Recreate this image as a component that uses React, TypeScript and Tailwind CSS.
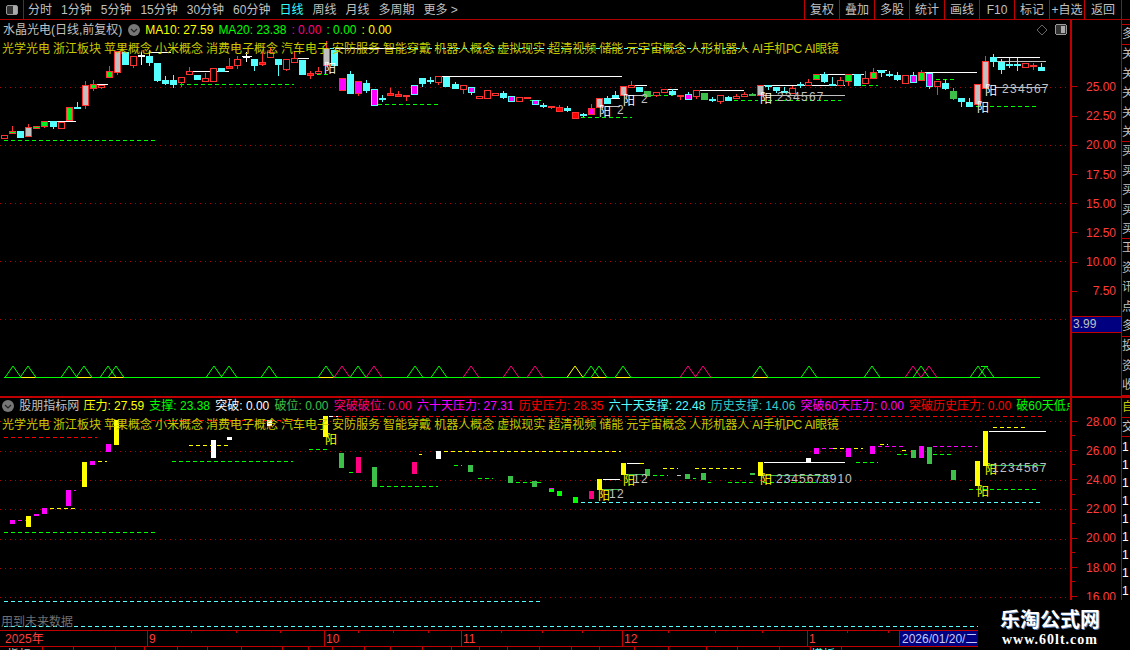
import React from "react";

const RED = "#ff3232";
const CYAN = "#55ffff";
const GREEN = "#00ff00";
const DULL = "#3cc04a";
const YELLOW = "#ffff00";
const MAGENTA = "#ff00ff";
const PINK = "#ff0080";
const WHITE = "#ffffff";
const GRAY = "#c0c0c0";

const candleStyle: Record<string, { fill: string; stroke: string; wick: string }> = {
  r: { fill: "#000000", stroke: RED, wick: RED },
  R: { fill: "#ff0000", stroke: RED, wick: RED },
  c: { fill: CYAN, stroke: CYAN, wick: CYAN },
  g: { fill: "#00ee20", stroke: RED, wick: RED },
  G: { fill: DULL, stroke: DULL, wick: DULL },
  m: { fill: MAGENTA, stroke: CYAN, wick: CYAN },
  M: { fill: MAGENTA, stroke: RED, wick: RED },
  w: { fill: GRAY, stroke: RED, wick: RED },
  W: { fill: WHITE, stroke: WHITE, wick: WHITE },
};

// type, body top, body bottom, wick top, wick bottom (read at 3x, divided below)
const candles: [string, number, number, number?, number?][] = [
  ["r", 406, 416], ["g", 394, 401, 378, 401], ["c", 394, 411], ["w", 381, 408, 372, 408], ["g", 378, 383],
  ["g", 364, 378, 364, 384], ["c", 364, 378, 364, 386], ["r", 366, 383], ["g", 322, 360], ["c", 321, 323, 306, 326],
  ["w", 255, 315, 243, 327], ["g", 252, 263, 240, 272], ["r", 256, 261, 256, 266], ["g", 213, 231, 198, 231], ["w", 153, 216, 153, 225],
  ["c", 155, 190, 155, 195], ["r", 168, 195, 168, 204], ["W", 165, 167, 155, 195], ["c", 168, 186, 150, 197], ["c", 190, 240, 190, 245],
  ["c", 240, 248, 228, 255], ["c", 240, 252, 225, 265], ["r", 232, 248, 232, 262], ["r", 214, 224, 200, 224], ["c", 225, 237, 225, 240],
  ["r", 235, 245, 220, 245], ["r", 205, 245], ["c", 205, 214], ["R", 197, 202, 175, 206], ["r", 178, 196, 168, 206],
  ["W", 168, 170, 155, 185], ["c", 178, 197, 178, 212], ["R", 187, 193, 155, 198], ["r", 155, 170, 140, 170], ["c", 178, 194, 178, 228],
  ["r", 178, 208, 178, 212], ["r", 175, 188, 155, 188], ["c", 180, 222], ["R", 219, 224, 212, 236], ["r", 213, 220, 202, 220],
  ["w", 145, 195, 122, 195], ["c", 150, 195], ["M", 234, 270], ["c", 222, 279, 212, 279], ["M", 243, 280, 243, 287],
  ["c", 250, 270, 240, 278], ["m", 267, 314], ["c", 295, 297, 285, 306], ["R", 278, 283, 265, 285], ["R", 283, 288, 272, 288],
  ["R", 286, 290, 286, 303], ["m", 255, 282], ["c", 235, 249, 235, 262], ["c", 240, 244, 230, 252], ["r", 229, 248, 229, 255],
  ["c", 230, 258], ["c", 252, 264, 245, 264], ["r", 256, 268, 256, 283], ["m", 262, 278, 262, 285], ["r", 289, 296],
  ["r", 270, 294], ["r", 278, 284, 278, 288], ["c", 279, 290, 272, 297], ["m", 288, 302], ["r", 292, 304],
  ["R", 292, 296], ["m", 300, 311], ["c", 315, 317, 308, 323], ["R", 318, 322, 318, 326], ["R", 322, 335, 315, 335],
  ["c", 325, 330, 318, 336], ["R", 335, 352], ["c", 343, 346, 338, 350], ["M", 324, 342, 312, 342], ["w", 294, 320],
  ["c", 294, 310, 288, 310], ["c", 284, 290, 274, 293], ["w", 258, 284], ["r", 256, 262, 243, 264], ["c", 260, 273],
  ["G", 273, 287], ["r", 277, 286, 277, 290], ["r", 268, 278], ["c", 273, 281, 268, 284], ["R", 286, 288, 286, 300],
  ["m", 282, 296, 276, 298], ["r", 271, 290, 271, 298], ["G", 279, 296], ["c", 297, 300, 292, 306], ["r", 286, 305, 286, 311],
  ["c", 291, 299, 288, 302], ["r", 289, 296, 283, 296], ["r", 282, 289, 276, 289], ["G", 282, 286, 279, 286], ["w", 256, 286],
  ["c", 256, 260, 256, 270], ["c", 262, 270, 262, 278], ["c", 272, 274, 260, 280], ["r", 264, 278, 258, 278], ["c", 253, 255, 246, 264],
  ["r", 247, 255, 238, 255], ["g", 222, 238], ["c", 222, 243, 216, 248], ["c", 252, 254, 232, 257], ["r", 240, 256, 230, 256],
  ["g", 223, 243, 223, 258], ["c", 223, 255], ["r", 234, 248, 214, 248], ["g", 216, 234, 204, 234], ["c", 210, 217, 210, 230],
  ["c", 221, 223, 214, 230], ["c", 225, 237, 217, 242], ["r", 226, 249], ["m", 225, 245, 217, 248], ["g", 217, 242, 210, 242],
  ["m", 218, 256, 218, 266], ["r", 244, 260, 244, 284], ["c", 249, 264, 238, 270], ["G", 273, 295, 265, 300], ["c", 294, 302, 294, 321],
  ["c", 306, 318, 295, 318], ["w", 252, 312], ["w", 183, 263, 168, 263], ["c", 172, 184, 162, 200], ["c", 185, 206, 178, 222],
  ["c", 192, 194, 174, 204], ["c", 192, 194, 174, 212], ["r", 190, 202], ["R", 196, 198, 190, 210], ["c", 201, 210, 190, 212],
];

// x1, x2, y, colour
const topSolid: [number, number, number, string][] = [
  [47, 76, 121, WHITE], [95, 108, 84, WHITE], [149, 171, 52, WHITE], [189, 229, 71, WHITE], [242, 252, 56, WHITE],
  [293, 309, 58, WHITE], [335, 400, 48, WHITE], [438, 622, 76, WHITE], [605, 620, 98, WHITE], [605, 620, 106, GRAY],
  [628, 647, 85, WHITE], [628, 647, 95, GRAY], [662, 678, 89, WHITE], [695, 744, 90, WHITE], [763, 845, 85, WHITE],
  [763, 845, 95, GRAY], [815, 864, 74, WHITE], [877, 887, 70, WHITE], [925, 977, 72, WHITE], [990, 1040, 57, WHITE],
  [990, 1046, 61, GRAY], [995, 1046, 87, GRAY],
];

const topDash: [number, number, number, string][] = [
  [4, 156, 140, GREEN], [173, 294, 84, GREEN], [310, 330, 74, GREEN], [378, 438, 104, GREEN], [476, 483, 98, GREEN],
  [530, 542, 100, GREEN], [581, 632, 117, GREEN], [650, 673, 95, GREEN], [727, 758, 100, GREEN], [761, 841, 100, GREEN],
  [862, 878, 85, GREEN], [929, 954, 79, GREEN], [969, 1039, 106, GREEN], [330, 750, 48, CYAN], [925, 977, 72, CYAN],
];

const triangles: [number, string, boolean?][] = [
  [13, GREEN], [28, GREEN, true], [69, GREEN], [84, GREEN, true], [108, GREEN], [116, GREEN, true], [214, GREEN], [229, GREEN],
  [269, GREEN], [326, GREEN, true], [342, PINK], [358, GREEN], [374, PINK], [415, GREEN], [439, GREEN], [471, PINK], [511, PINK],
  [535, PINK], [575, YELLOW], [591, GREEN], [599, GREEN, true], [623, GREEN, true], [688, PINK], [703, PINK], [760, GREEN, true],
  [809, GREEN], [872, GREEN], [913, PINK], [921, GREEN], [929, PINK], [978, GREEN], [986, GREEN],
];

// x, top, bottom, colour
const lowerBars: [number, number, number, string][] = [
  [10, 520, 524, MAGENTA], [26, 516, 527, YELLOW], [34, 514, 516, MAGENTA], [42, 508, 514, MAGENTA], [66, 490, 506, MAGENTA],
  [82, 462, 487, YELLOW], [90, 461, 465, MAGENTA], [106, 444, 452, MAGENTA], [114, 420, 445, YELLOW], [211, 440, 458, WHITE],
  [227, 437, 440, WHITE], [267, 420, 426, WHITE], [323, 416, 437, YELLOW], [339, 453, 468, DULL], [356, 457, 473, PINK],
  [372, 467, 487, DULL], [412, 462, 474, PINK], [436, 451, 459, WHITE], [468, 465, 472, DULL], [508, 476, 483, DULL],
  [532, 481, 487, DULL], [549, 489, 492, GREEN], [557, 491, 496, GREEN], [573, 497, 503, GREEN], [589, 491, 499, PINK],
  [597, 479, 490, YELLOW], [621, 463, 475, YELLOW], [645, 469, 476, DULL], [685, 474, 479, DULL], [701, 473, 480, DULL],
  [750, 473, 475, DULL], [758, 462, 476, YELLOW], [806, 458, 462, WHITE], [814, 448, 454, MAGENTA], [846, 448, 457, MAGENTA],
  [870, 446, 454, MAGENTA], [911, 450, 458, DULL], [919, 446, 458, MAGENTA], [927, 447, 464, DULL], [951, 470, 480, DULL],
  [975, 461, 486, YELLOW], [983, 431, 466, YELLOW],
];

const lowerSolid: [number, number, number, string][] = [
  [603, 620, 479, WHITE], [602, 621, 489, DULL], [627, 640, 463, WHITE], [626, 645, 474, DULL], [764, 845, 462, WHITE],
  [763, 833, 475, DULL], [989, 1046, 431, WHITE], [988, 1045, 465, DULL],
];

const lowerDash: [number, number, number, string][] = [
  [151, 306, 420, "#ff0000"], [331, 1042, 416, "#ff0000"], [4, 97, 437, "#ff0000"], [4, 156, 532, GREEN], [189, 229, 445, YELLOW],
  [172, 293, 461, GREEN], [309, 330, 449, GREEN], [329, 338, 416, WHITE], [349, 356, 472, GREEN], [380, 438, 486, GREEN],
  [419, 422, 454, YELLOW], [444, 621, 451, YELLOW], [454, 462, 465, GREEN], [478, 493, 478, GREEN], [516, 542, 482, GREEN],
  [50, 76, 508, YELLOW], [18, 26, 520, MAGENTA], [74, 76, 490, MAGENTA], [98, 107, 461, YELLOW], [581, 1041, 502, CYAN],
  [640, 644, 463, YELLOW], [653, 668, 475, GREEN], [663, 678, 468, YELLOW], [677, 682, 475, GRAY], [693, 696, 478, GREEN],
  [695, 744, 468, YELLOW], [708, 711, 482, GREEN], [728, 755, 482, GREEN], [763, 832, 482, GREEN], [822, 833, 448, MAGENTA],
  [833, 863, 448, YELLOW], [856, 878, 462, GREEN], [880, 888, 444, YELLOW], [878, 906, 446, MAGENTA], [902, 906, 450, YELLOW],
  [897, 907, 454, GREEN], [933, 953, 454, GREEN], [933, 977, 446, MAGENTA], [969, 1039, 489, GREEN], [993, 1028, 427, YELLOW],
  [4, 541, 601, CYAN], [4, 978, 626, CYAN],
];

const concepts = ["光学光电", "浙江板块", "苹果概念", "小米概念", "消费电子概念", "汽车电子", "安防服务", "智能穿戴", "机器人概念", "虚拟现实", "超清视频", "储能", "元宇宙概念", "人形机器人"];

const lowerLegend: [string, string, string][] = [
  ["压力", "27.59", YELLOW], ["支撑", "23.38", GREEN], ["突破", "0.00", WHITE], ["破位", "0.00", DULL], ["突破破位", "0.00", PINK],
  ["六十天压力", "27.31", MAGENTA], ["历史压力", "28.35", "#ff0000"], ["六十天支撑", "22.48", CYAN], ["历史支撑", "14.06", "#33cccc"],
  ["突破60天压力", "0.00", MAGENTA], ["突破历史压力", "0.00", "#ff0000"], ["破60天低点", "0.00", GREEN],
];

const toolbarLeft = ["分时", "1分钟", "5分钟", "15分钟", "30分钟", "60分钟", "日线", "周线", "月线", "多周期", "更多 >"];
const toolbarRight = ["复权", "叠加", "多股", "统计", "画线", "F10", "标记", "+自选"];

const candleX = (i: number) => Math.round(4.3 + 8.04 * i);

function Circle() {
  return (
    <svg width="12" height="12" viewBox="0 0 12 12" className="shrink-0">
      <circle cx="6" cy="6" r="6" fill="#777777" />
      <path d="M3 5l3 3 3-3" fill="none" stroke="#222222" strokeWidth="1.2" />
    </svg>
  );
}

function Dotted({ ys }: { ys: number[] }) {
  return (
    <>
      {ys.map((y) => (
        <line key={y} x1="0" x2="1070" y1={y + 0.5} y2={y + 0.5} stroke="#b00000" strokeDasharray="1 4" />
      ))}
    </>
  );
}

function Lines({ items, dash }: { items: [number, number, number, string][]; dash?: boolean }) {
  return (
    <>
      {items.map(([x1, x2, y, c], i) => (
        <line key={i} x1={x1} x2={x2} y1={y + 0.5} y2={y + 0.5} stroke={c} strokeDasharray={dash ? "4 3" : undefined} />
      ))}
    </>
  );
}

function Yang({ x, y, c = WHITE, count, cx }: { x: number; y: number; c?: string; count?: string; cx?: number }) {
  return (
    <>
      <text x={x} y={y} fill={c} fontSize="12">阳</text>
      {count && (
        <text x={cx} y={y - 2} fill={GRAY} fontSize="12" letterSpacing="1.3">{count}</text>
      )}
    </>
  );
}

function TopChart() {
  return (
    <svg className="absolute inset-0" width="1070" height="376" viewBox="0 20 1070 376" shapeRendering="crispEdges">
      <Dotted ys={[87, 145, 203, 261, 319]} />
      <Lines items={topDash} dash />
      <Lines items={topSolid} />
      {candles.map(([t, top, bottom, wt, wb], i) => {
        const s = candleStyle[t];
        const cx = candleX(i);
        return (
          <g key={i}>
            <line
              x1={cx + 0.5}
              x2={cx + 0.5}
              y1={Math.round((wt ?? top) / 3)}
              y2={Math.round((wb ?? bottom) / 3)}
              stroke={s.wick}
            />
            <rect
              x={cx - 2.5}
              y={Math.round(top / 3) + 0.5}
              width="6"
              height={Math.max(1, Math.round((bottom - top) / 3))}
              fill={s.fill}
              stroke={s.stroke}
            />
          </g>
        );
      })}
      <line x1="4" x2="1040" y1="377.5" y2="377.5" stroke={GREEN} />
      <g shapeRendering="auto">
        {triangles.map(([x, c, under], i) => (
          <g key={i}>
            <path d={`M${x - 8} 377.5L${x} 366L${x + 8} 377.5`} fill="none" stroke={c} />
            {under && <line x1={x - 7} x2={x + 7} y1="377.5" y2="377.5" stroke={YELLOW} />}
          </g>
        ))}
      </g>
      <line x1="981" x2="988" y1="366" y2="366" stroke={GREEN} />
      <path d="M1042 25l5 5-5 5-5-5z" fill="none" stroke="#666666" shapeRendering="auto" />
      <rect x="1055.5" y="24.5" width="11" height="10" rx="2" fill="#333333" stroke="#999999" />
      <rect x="1061" y="26" width="4" height="7" fill="#aaaaaa" />
      <g shapeRendering="auto">
        <Yang x={324} y={73} />
        <Yang x={599} y={116} count="2" cx={617} />
        <Yang x={623} y={105} count="2" cx={641} />
        <Yang x={760} y={103} count="234567" cx={777} />
        <Yang x={985} y={95} count="234567" cx={1002} />
        <Yang x={977} y={112} />
      </g>
    </svg>
  );
}

function LowerChart() {
  return (
    <svg className="absolute inset-0" width="1070" height="232" viewBox="0 398 1070 232" shapeRendering="crispEdges">
      <Dotted ys={[421, 451, 480, 509, 539, 568, 597]} />
      <Lines items={lowerDash} dash />
      <Lines items={lowerSolid} />
      {lowerBars.map(([x, top, bottom, c], i) => (
        <rect key={i} x={x} y={top} width="5" height={bottom - top} fill={c} />
      ))}
      <rect x="549" y="488" width="5" height="1" fill={MAGENTA} />
      <g shapeRendering="auto">
        <Yang x={325} y={444} c={YELLOW} />
        <Yang x={598} y={500} c={YELLOW} count="12" cx={609} />
        <Yang x={623} y={485} c={YELLOW} count="12" cx={633} />
        <Yang x={760} y={484} c={YELLOW} />
        <text x={776} y={483} fill={GRAY} fontSize="12" letterSpacing="1">2345678910</text>
        <Yang x={977} y={496} c={YELLOW} />
        <Yang x={985} y={474} c={YELLOW} count="1234567" cx={992} />
      </g>
    </svg>
  );
}

function AxisRow({ label, minor }: { label: string; minor?: boolean }) {
  return (
    <div className="relative flex h-[29.2px] items-center justify-between pr-[5px] text-xs text-[#ff3c3c]">
      <span className="h-px w-[5px] bg-[#c00000]" />
      <span>{label}</span>
      {minor && <span className="absolute bottom-0 left-0 h-px w-[3px] bg-[#c00000]" />}
    </div>
  );
}

function ClippedChars({ text, height, color = "#c0c0c0" }: { text: string; height: number; color?: string }) {
  return (
    <div
      className="flex flex-col overflow-hidden border-b border-[#c00000] text-xs leading-[19.5px]"
      style={{ height, color }}
    >
      {text.split("").map((c, i) => (
        <span key={i} className="w-[12px] shrink-0">{c}</span>
      ))}
    </div>
  );
}

function ConceptRow({ className }: { className: string }) {
  return (
    <div className={`relative flex items-center gap-[3px] pl-[2px] text-[#c8c800] ${className}`}>
      {concepts.map((c) => <span key={c}>{c}</span>)}
      <span className="tracking-[-0.4px]">AI手机PC</span>
      <span className="tracking-[-0.5px]">AI眼镜</span>
    </div>
  );
}

export default function App() {
  return (
    <div className="relative flex h-[650px] w-[1130px] flex-col overflow-hidden bg-black font-['Liberation_Sans','Noto_Sans_CJK_SC',sans-serif] text-xs text-[#c0c0c0]">
      {/* toolbar */}
      <div className="flex h-[20px] shrink-0 items-center border-b border-[#b00000]">
        <div className="flex h-full w-[24px] shrink-0 items-center justify-center border-r border-[#c00000]">
          <div className="flex h-[10px] w-[12px] justify-end rounded-[2px] border border-[#999999] bg-[#333333]">
            <span className="h-full w-[4px] bg-[#aaaaaa]" />
          </div>
        </div>
        <div className="ml-[4px] flex gap-[9px]">
          {toolbarLeft.map((t) => (
            <span key={t} className={t === "日线" ? "text-[#33ffff]" : ""}>{t}</span>
          ))}
        </div>
        <div className="ml-auto flex h-full">
          {toolbarRight.map((t) => (
            <span key={t} className="flex h-full w-[35px] items-center justify-center border-l border-[#c00000]">{t}</span>
          ))}
          <span className="flex h-full w-[38px] items-center border-x border-[#c00000] pl-[6px]">返回</span>
          <span className="w-[8px]" />
        </div>
      </div>

      <div className="flex h-[610px] shrink-0">
        {/* chart panes */}
        <div className="flex w-[1070px] shrink-0 flex-col overflow-hidden">
          <div className="relative h-[376px] shrink-0">
            <TopChart />
            <div className="relative flex h-[20px] items-center gap-[5px] whitespace-pre pl-[3px]">
              <span>水晶光电(日线,前复权)</span>
              <span className="ml-[1px]"><Circle /></span>
              <span className="text-[#ffff00]">MA10: 27.59</span>
              <span className="text-[#00ff00]">MA20: 23.38</span>
              <span className="text-[#ff0080]">: 0.00</span>
              <span className="text-[#00ff00]">: 0.00</span>
              <span className="text-[#ffff00]">: 0.00</span>
            </div>
            <ConceptRow className="h-[18px]" />
          </div>
          <div className="h-[2px] shrink-0 bg-[#c00000]" />
          <div className="relative h-[232px] shrink-0">
            <LowerChart />
            <div className="relative flex h-[16px] items-center gap-[5.2px] whitespace-pre pl-[2px]">
              <Circle />
              <span className="mr-[-1px] text-[#c0c0c0]">股朋指标网</span>
              {lowerLegend.map(([k, v, c]) => (
                <span key={k} className="shrink-0" style={{ color: c }}>{k}: {v}</span>
              ))}
            </div>
            <ConceptRow className="h-[22px]" />
            <span className="absolute bottom-0 left-[1px] text-[#707070]">用到未来数据</span>
          </div>
        </div>

        {/* price axis */}
        <div className="flex w-[52px] shrink-0 flex-col border-x border-[#c00000]">
          <div className="h-[376px] shrink-0 border-l border-[#c00000] pt-[52.4px]">
            {["25.00", "22.50", "20.00", "17.50", "15.00", "12.50", "10.00", "7.50"].map((l) => (
              <AxisRow key={l} label={l} />
            ))}
            <div className="mt-[10px] flex h-[17px] items-center border-y border-[#c00000] bg-[#000080] pl-px">3.99</div>
          </div>
          <div className="h-[2px] shrink-0 bg-[#c00000]" />
          <div className="h-[202px] shrink-0 overflow-hidden border-l border-[#c00000] pt-[9px]">
            {["28.00", "26.00", "24.00", "22.00", "20.00", "18.00", "16.00"].map((l) => (
              <AxisRow key={l} label={l} minor />
            ))}
          </div>
        </div>

        {/* side tabs, cut off by the window edge */}
        <div className="flex w-[8px] shrink-0 flex-col overflow-hidden">
          <div className="h-[5px] shrink-0 border-b border-[#c00000]" />
          <ClippedChars text="多" height={20} />
          <ClippedChars text="关关关关关" height={97} />
          <ClippedChars text="买买买买买" height={97} />
          <ClippedChars text="玉资讯点多" height={98} />
          <ClippedChars text="投资收" height={59} />
          <div className="h-[2px] shrink-0 bg-[#c00000]" />
          <ClippedChars text="自" height={20} color="#c8c800" />
          <ClippedChars text="交" height={19} />
          <div className="flex flex-col pt-[1px] text-xs leading-[18px] text-white">
            {["1", "1", "1", "1", "1", "1", "1", "1", "1"].map((n, i) => <span key={i}>{n}</span>)}
          </div>
        </div>
      </div>

      {/* date axis */}
      <div className="relative flex h-[17px] w-[979px] shrink-0 border-y border-[#c00000] text-[#ff3c3c]">
        <span className="w-[147px] pl-[5px]">2025年</span>
        <span className="w-[177px] border-l border-[#c00000] pl-[1px]">9</span>
        <span className="w-[137px] border-l border-[#c00000] pl-[1px]">10</span>
        <span className="w-[161px] border-l border-[#c00000] pl-[1px]">11</span>
        <span className="w-[185px] border-l border-[#c00000] pl-[1px]">12</span>
        <span className="w-[92px] border-l border-[#c00000] pl-[1px]">1</span>
        <span className="w-[80px] border-x border-[#c00000] bg-[#000080] pl-[2px] text-[#c8c8ff]">2026/01/20/二</span>
        <svg className="absolute left-0 top-0" width="899" height="3" shapeRendering="crispEdges">
          {[191, 236, 280, 358, 393, 428, 501, 542, 582, 668, 715, 762, 847, 888].map((x) => (
            <line key={x} x1={x + 0.5} x2={x + 0.5} y1="0" y2="2" stroke="#c00000" />
          ))}
        </svg>
      </div>

      {/* tab strip, only its top edge is in the window */}
      <div className="flex h-[3px] overflow-hidden text-[#c0c0c0]">
        <span className="w-[42px] pl-[7px]">指标</span>
        {[31, 42, 29, 33, 30, 34, 41, 26, 24, 32, 26, 32, 29, 28, 28, 32, 32, 28, 35, 34, 38, 31, 42, 31].map((w, i) => (
          <span key={i} className="border-l border-[#c00000]" style={{ width: w }} />
        ))}
        <span className="w-[32px] border-x border-[#c00000] text-[#55ffff]">模板</span>
      </div>

      {/* site watermark */}
      <div className="absolute bottom-0 right-0 flex h-[50px] w-[152px] flex-col items-center bg-black pr-[8px] pt-[8px] text-white">
        <span className="font-['Noto_Sans_CJK_SC',sans-serif] text-[20px] font-bold leading-[22px] [text-shadow:1px_1px_0_#5577aa]">乐淘公式网</span>
        <span className="mt-[3px] font-['Liberation_Serif',serif] text-sm font-bold leading-[14px] tracking-[1px]">www.60lt.com</span>
      </div>
    </div>
  );
}
